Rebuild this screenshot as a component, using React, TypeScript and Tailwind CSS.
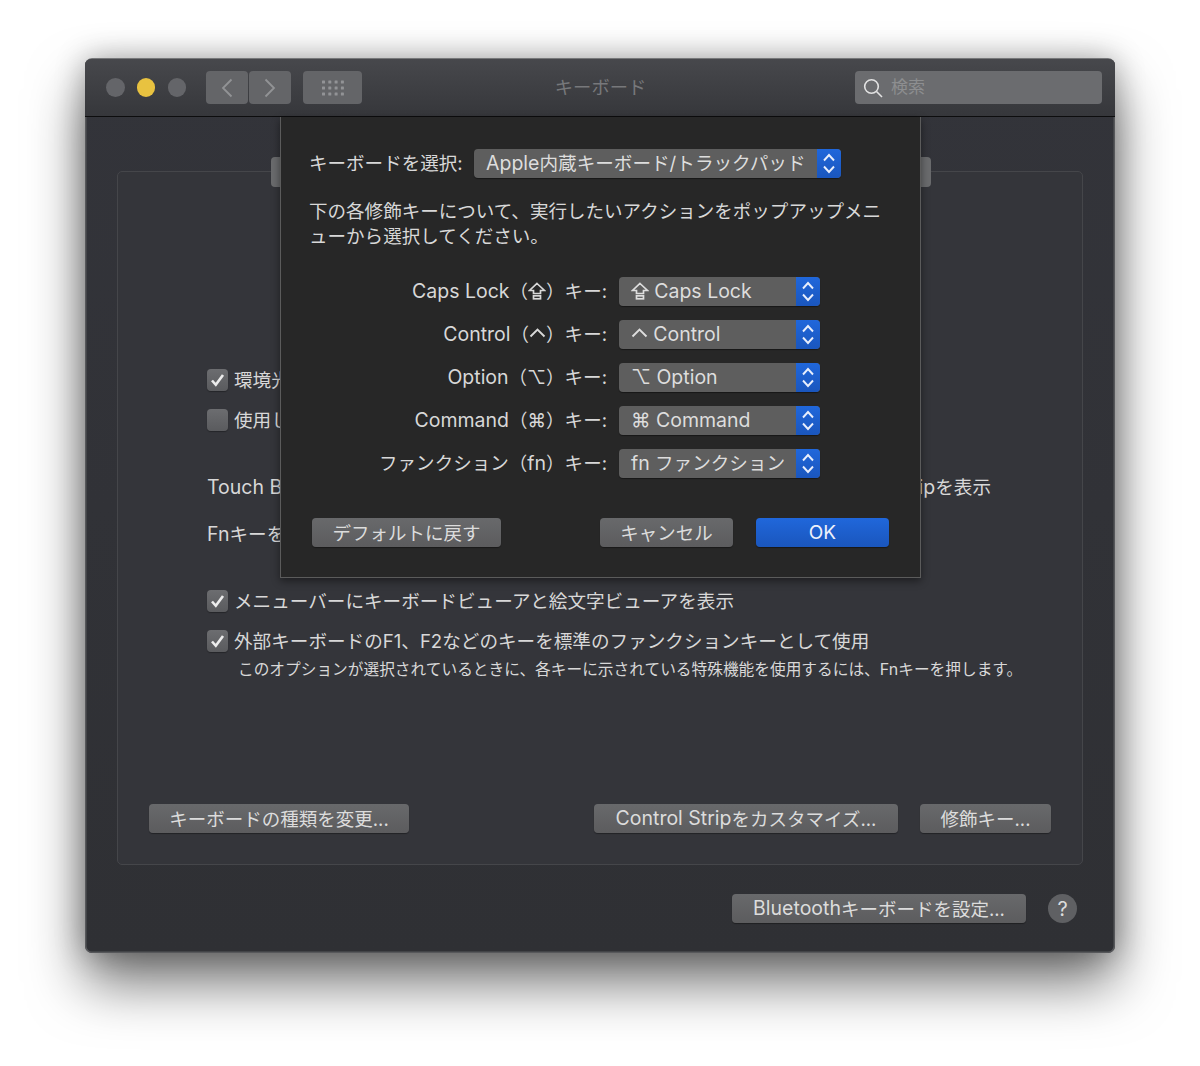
import React from "react";

const font = { fontFamily: 'Inter, "Noto Sans CJK JP", "DejaVu Sans", sans-serif' };

function L({ children }: { children: React.ReactNode }) {
  return <span className="text-[19.5px]">{children}</span>;
}

const CapsIcon = () => (
  <svg className="inline-block align-[-2px]" width="18" height="18" viewBox="0 0 18 18" fill="none" stroke="currentColor" strokeWidth="1.7">
    <path d="M9 1.5 L16.5 8.5 H12.5 V11.5 H5.5 V8.5 H1.5 Z" />
    <rect x="5.5" y="13.8" width="7" height="3" />
  </svg>
);

const ControlIcon = () => (
  <svg className="inline-block align-[3px]" width="17" height="10" viewBox="0 0 17 10" fill="none" stroke="currentColor" strokeWidth="1.9">
    <path d="M1.5 8.5 L8.5 1.5 L15.5 8.5" />
  </svg>
);

const keyRows = [
  { id: "caps", label: <><L>Caps Lock</L>（<CapsIcon />）キー:</>, value: <><CapsIcon /> <L>Caps Lock</L></> },
  { id: "control", label: <><L>Control</L>（<ControlIcon />）キー:</>, value: <><ControlIcon /> <L>Control</L></> },
  { id: "option", label: <><L>Option</L>（⌥）キー:</>, value: <><L>⌥ Option</L></> },
  { id: "command", label: <><L>Command</L>（⌘）キー:</>, value: <><L>⌘ Command</L></> },
  { id: "fn", label: <>ファンクション（<L>fn</L>）キー:</>, value: <><L>fn</L> ファンクション</> },
];

function Check({ checked = true }: { checked?: boolean }) {
  return (
    <span className="flex h-[22px] w-[21px] shrink-0 items-center justify-center rounded-[4px] bg-gradient-to-b from-[#6c6d70] to-[#5a5b5e] shadow-[0_1px_1px_rgba(0,0,0,0.3)]">
      {checked && (
        <svg width="15" height="14" viewBox="0 0 15 14" fill="none">
          <path d="M2 7.5 L5.8 11.8 L13 2" stroke="#ececec" strokeWidth="2.6" />
        </svg>
      )}
    </span>
  );
}

function CheckRow({ checked, children, className }: { checked?: boolean; children: React.ReactNode; className: string }) {
  return (
    <div className={`flex h-[22px] items-center gap-[6px] whitespace-nowrap ${className}`}>
      <Check checked={checked} />
      <span className="pt-[1px]">{children}</span>
    </div>
  );
}

function Button({ children, className }: { children: React.ReactNode; className: string }) {
  return (
    <div className={`flex h-[29px] items-center justify-center rounded-[4px] bg-gradient-to-b from-[#68696b] to-[#5c5c5e] pt-[1px] text-[18.5px] leading-none text-[#dcdcdc] shadow-[0_1px_1px_rgba(0,0,0,0.35)] ${className}`}>
      {children}
    </div>
  );
}

function Popup({ children, className }: { children: React.ReactNode; className: string }) {
  return (
    <div className={`flex h-[29px] items-center rounded-[4px] bg-[#5e5e5e] text-[18.6px] leading-none text-[#dddddd] shadow-[0_1px_1px_rgba(0,0,0,0.4)] ${className}`}>
      <span className="flex-1 whitespace-nowrap pl-[12px]">{children}</span>
      <span className="flex h-full w-[24px] shrink-0 items-center justify-center rounded-r-[4px] bg-gradient-to-b from-[#2067db] to-[#1a56bd]">
        <svg width="14" height="23" viewBox="0 0 14 23" fill="none" stroke="#e8eefc" strokeWidth="1.9">
          <path d="M2 8.5 L7 3 L12 8.5" />
          <path d="M2 14.5 L7 20 L12 14.5" />
        </svg>
      </span>
    </div>
  );
}

function TitleBar() {
  return (
    <div className="flex h-[58px] items-center border-b border-[#0d0d0e] bg-gradient-to-b from-[#47484c] to-[#36373b] pl-[21px] pr-[13px]">
      <div className="flex gap-[12.3px]">
        <span className="h-[18.5px] w-[18.5px] rounded-full bg-[#646569]" />
        <span className="h-[18.5px] w-[18.5px] rounded-full bg-[#e8c240]" />
        <span className="h-[18.5px] w-[18.5px] rounded-full bg-[#646569]" />
      </div>
      <div className="ml-[20px] flex gap-[1px]">
        <span className="flex h-[33px] w-[42px] items-center justify-center rounded-[4px] bg-[#646568]">
          <svg width="12" height="20" viewBox="0 0 12 20" fill="none" stroke="#929396" strokeWidth="1.8">
            <path d="M10.5 1.5 L2 10 L10.5 18.5" />
          </svg>
        </span>
        <span className="flex h-[33px] w-[42px] items-center justify-center rounded-[4px] bg-[#646568]">
          <svg width="12" height="20" viewBox="0 0 12 20" fill="none" stroke="#929396" strokeWidth="1.8">
            <path d="M1.5 1.5 L10 10 L1.5 18.5" />
          </svg>
        </span>
      </div>
      <span className="ml-[12px] flex h-[33px] w-[59px] items-center justify-center rounded-[4px] bg-[#646568]">
        <svg width="22" height="16" viewBox="0 0 22 16" fill="#929396">
          {[0, 6, 12].map((y) =>
            [0, 6.3, 12.6, 18.9].map((x) => <rect key={`${x}-${y}`} x={x} y={y + 0.5} width="3" height="3" rx="0.5" />)
          )}
        </svg>
      </span>
      <div className="flex-1 pr-[16px] pt-[1px] text-center text-[18.3px] text-[#77787b]">キーボード</div>
      <div className="flex h-[33px] w-[247px] items-center rounded-[4px] bg-[#6b6c6f] pl-[8px]">
        <svg width="20" height="20" viewBox="0 0 20 20" fill="none" stroke="#e2e2e2" strokeWidth="1.6">
          <circle cx="8.5" cy="8.5" r="6.8" />
          <path d="M13.5 13.5 L19 19" />
        </svg>
        <span className="ml-[8px] text-[17px] text-[#8d8e90]">検索</span>
      </div>
    </div>
  );
}

function Sheet() {
  return (
    <div className="absolute left-[195px] top-[58px] h-[461px] w-[641px] border border-t-0 border-[#5b5b5b] bg-[#272727] pl-[28px] pt-[32px] text-[18.55px] text-[#d8d8d8] shadow-[0_3px_8px_rgba(0,0,0,0.45)]">
      <div className="flex h-[29px] items-center">
        <span className="w-[165px] leading-[29px]">キーボードを選択:</span>
        <Popup className="w-[367px]"><L>Apple</L>内蔵キーボード/トラックパッド</Popup>
      </div>
      <p className="mt-[21px] w-[580px] leading-[25px]">
        下の各修飾キーについて、実行したいアクションをポップアップメニューから選択してください。
      </p>
      <div className="mt-[28px] flex flex-col gap-[14px]">
        {keyRows.map((r) => (
          <div key={r.id} className="flex h-[29px] items-center">
            <span className="h-[29px] w-[298px] whitespace-nowrap text-right leading-[29px]">{r.label}</span>
            <Popup className="ml-[12px] w-[201px]">{r.value}</Popup>
          </div>
        ))}
      </div>
      <div className="mt-[40px] flex pl-[3px]">
        <Button className="w-[189px]">デフォルトに戻す</Button>
        <Button className="ml-[99px] w-[133px]">キャンセル</Button>
        <div className="ml-[23px] flex h-[29px] w-[133px] items-center justify-center rounded-[4px] bg-gradient-to-b from-[#2067db] to-[#1a56bd] pt-[1px] text-[19px] text-[#eef2fb] shadow-[0_1px_1px_rgba(0,0,0,0.4)]">
          OK
        </div>
      </div>
    </div>
  );
}

export default function App() {
  return (
    <div className="h-[1066px] w-[1200px] bg-white pl-[85px] pt-[58px]" style={font}>
      <div className="relative h-[895px] w-[1030px] rounded-[7px] border-t border-[#77787a] bg-gradient-to-b from-[#33343a] to-[#2f3034] shadow-[inset_0_0_0_1.5px_#57585b,0_30px_55px_rgba(0,0,0,0.55),0_0_30px_rgba(0,0,0,0.3)]">
        <div className="overflow-hidden rounded-t-[6px]">
          <TitleBar />
        </div>

        <div className="relative ml-[32px] mt-[54px] h-[694px] w-[966px] rounded-[5px] border border-[#45464a] bg-[#34353a] pl-[89px] pr-[91px] pt-[197px] text-[18.6px] text-[#d8d8d8]">
          <span className="absolute left-[153px] top-[-15px] h-[30px] w-[660px] rounded-[4px] bg-[#6a6b6d]" />
          <CheckRow className="">環境光が暗い場合にキーボードの輝度を調整</CheckRow>
          <CheckRow checked={false} className="mt-[18px]">使用しない場合にキーボードバックライトをオフにする</CheckRow>
          <div className="mt-[44px] flex h-[24px] items-center justify-between whitespace-nowrap pt-[2px]">
            <span><L>Touch Bar</L>に表示する項目:</span>
            <span><L>Control Strip</L>を表示</span>
          </div>
          <div className="mt-[23px] h-[24px] leading-[24px]"><L>Fn</L>キーを押して:</div>
          <CheckRow className="mt-[44px]">メニューバーにキーボードビューアと絵文字ビューアを表示</CheckRow>
          <CheckRow className="mt-[18px]">外部キーボードのF1、F2などのキーを標準のファンクションキーとして使用</CheckRow>
          <div className="ml-[31px] mt-[5px] h-[24px] whitespace-nowrap text-[15.7px] leading-[24px]">
            このオプションが選択されているときに、各キーに示されている特殊機能を使用するには、<span className="text-[16px]">Fn</span>キーを押します。
          </div>
          <div className="-ml-[58px] mt-[123px] flex w-[902px]">
            <Button className="w-[260px]">キーボードの種類を変更...</Button>
            <Button className="ml-[185px] w-[304px]"><L>Control Strip</L>をカスタマイズ...</Button>
            <Button className="ml-[22px] w-[131px]">修飾キー...</Button>
          </div>
        </div>

        <div className="mt-[29px] flex items-center justify-end pr-[38px]">
          <Button className="w-[294px]"><L>Bluetooth</L>キーボードを設定...</Button>
          <span className="ml-[22px] flex h-[29px] w-[29px] items-center justify-center rounded-full bg-[#5f6063] text-[20px] text-[#dcdcdc]">?</span>
        </div>

        <Sheet />
      </div>
    </div>
  );
}
